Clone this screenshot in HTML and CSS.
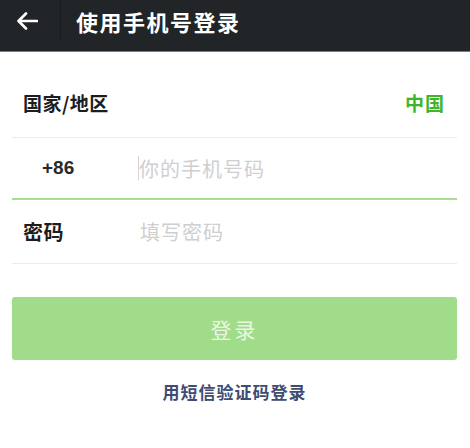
FILE: index.html
```html
<!DOCTYPE html>
<html lang="zh-CN">
<head>
    <meta charset="UTF-8">
    <meta name="viewport" content="width=device-width, initial-scale=1.0">
    <title>使用手机号登录</title>
    <link rel="stylesheet" href="styles.css">
</head>
<body>
    <header class="topbar">
        <button class="back" aria-label="返回">
            <svg width="22" height="18" viewBox="0 0 22 18">
                <path d="M21 9H2.5M10 1.5L2.5 9l7.5 7.5" fill="none" stroke="#fff" stroke-width="2.6" stroke-linecap="round" stroke-linejoin="round"/>
            </svg>
        </button>
        <span class="divider"></span>
        <h1 class="title">使用手机号登录</h1>
    </header>
    <main class="login">
        <div class="row country">
            <span class="label">国家/地区</span>
            <span class="value">中国</span>
        </div>
        <div class="row phone">
            <span class="code">+86</span>
            <span class="cursor"></span>
            <input type="text" placeholder="你的手机号码">
        </div>
        <div class="row password">
            <span class="label">密码</span>
            <input type="password" placeholder="填写密码">
        </div>
        <button class="submit" disabled>登录</button>
        <a class="sms" href="#">用短信验证码登录</a>
    </main>
</body>
</html>
```

FILE: styles.css
```css
* { box-sizing: border-box; }
body {
    margin: 0;
    background: #fff;
    font-family: "Noto Sans CJK SC", "Noto Sans", sans-serif;
    color: #1a1a1a;
}
.topbar {
    height: 52px;
    background: #222528;
    border-bottom: 1px solid #7a7c7e;
    display: flex;
    align-items: center;
    padding-bottom: 10px;
}
.back {
    width: 60px;
    height: 100%;
    background: none;
    border: 0;
    padding: 0 0 0 16px;
    display: flex;
    align-items: center;
}
.divider {
    width: 1px;
    height: 100%;
    background: #1a1c1e;
}
.title {
    margin: 0 0 0 15px;
    font-size: 22px;
    font-weight: 700;
    color: #fff;
    letter-spacing: 1.5px;
    line-height: 1;
}
.login {
    padding: 16px 13px 0 12px;
    display: flex;
    flex-direction: column;
}
.row {
    display: flex;
    align-items: center;
    border-bottom: 1px solid #ebebeb;
    padding-left: 11px;
}
.country {
    height: 70px;
    justify-content: space-between;
    padding-right: 12px;
}
.phone {
    height: 62px;
    border-bottom: 2px solid #a9dc98;
    padding-left: 30px;
}
.password {
    height: 64px;
}
.label {
    font-size: 19px;
    font-weight: 700;
    color: #1d1d1d;
    letter-spacing: 0.5px;
}
.password .label {
    width: 115px;
    font-size: 20px;
}
.value {
    font-size: 19px;
    font-weight: 700;
    color: #3fb52a;
    letter-spacing: 1px;
}
.code {
    width: 96px;
    font-family: "Liberation Sans", sans-serif;
    font-size: 19px;
    font-weight: 700;
    color: #2a2a2a;
}
.cursor {
    width: 1px;
    height: 24px;
    background: #d4d4d4;
}
input {
    flex: 1;
    border: 0;
    outline: none;
    padding: 0;
    font-family: inherit;
    font-size: 20px;
    background: transparent;
}
.password input {
    margin-left: 2px;
}
input::placeholder {
    color: #cfcfcf;
    letter-spacing: 1px;
}
.submit {
    margin-top: 33px;
    height: 63px;
    border: 0;
    border-radius: 3px;
    background: #a1dc8b;
    color: #e9f7e2;
    font-family: inherit;
    font-size: 21px;
    letter-spacing: 3px;
}
.sms {
    margin-top: 19px;
    align-self: center;
    font-size: 17px;
    font-weight: 700;
    color: #3e4c72;
    text-decoration: none;
    letter-spacing: 1px;
}
```
